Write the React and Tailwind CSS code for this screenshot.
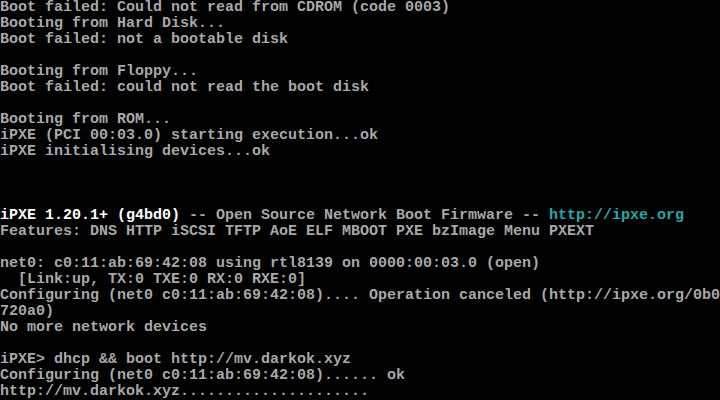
export default function App() {
  const g = "text-[#a8a8a8]";
  const lines = [
    "Boot failed: Could not read from CDROM (code 0003)",
    "Booting from Hard Disk...",
    "Boot failed: not a bootable disk",
    "",
    "Booting from Floppy...",
    "Boot failed: could not read the boot disk",
    "",
    "Booting from ROM...",
    "iPXE (PCI 00:03.0) starting execution...ok",
    "iPXE initialising devices...ok",
    "",
    "",
    "",
  ];
  const lines2 = [
    "Features: DNS HTTP iSCSI TFTP AoE ELF MBOOT PXE bzImage Menu PXEXT",
    "",
    "net0: c0:11:ab:69:42:08 using rtl8139 on 0000:00:03.0 (open)",
    "  [Link:up, TX:0 TXE:0 RX:0 RXE:0]",
    "Configuring (net0 c0:11:ab:69:42:08).... Operation canceled (http://ipxe.org/0b0",
    "720a0)",
    "No more network devices",
    "",
    "iPXE> dhcp && boot http://mv.darkok.xyz",
    "Configuring (net0 c0:11:ab:69:42:08)...... ok",
    "http://mv.darkok.xyz.....................",
  ];
  const Row = ({ children }) => (
    <div className="h-[16px] whitespace-pre">{children || "\u00a0"}</div>
  );
  return (
    <div
      className={`w-[720px] h-[400px] bg-black overflow-hidden ${g} font-bold text-[15px] leading-[16px]`}
      style={{ fontFamily: '"Liberation Mono", "DejaVu Sans Mono", monospace' }}
    >
      {lines.map((l, i) => (
        <Row key={"a" + i}>{l}</Row>
      ))}
      <Row>
        <span className="text-white">iPXE 1.20.1+ (g4bd0)</span>
        {" -- Open Source Network Boot Firmware -- "}
        <span className="text-[#22a8a8]">http://ipxe.org</span>
      </Row>
      {lines2.map((l, i) => (
        <Row key={"b" + i}>{l}</Row>
      ))}
    </div>
  );
}
